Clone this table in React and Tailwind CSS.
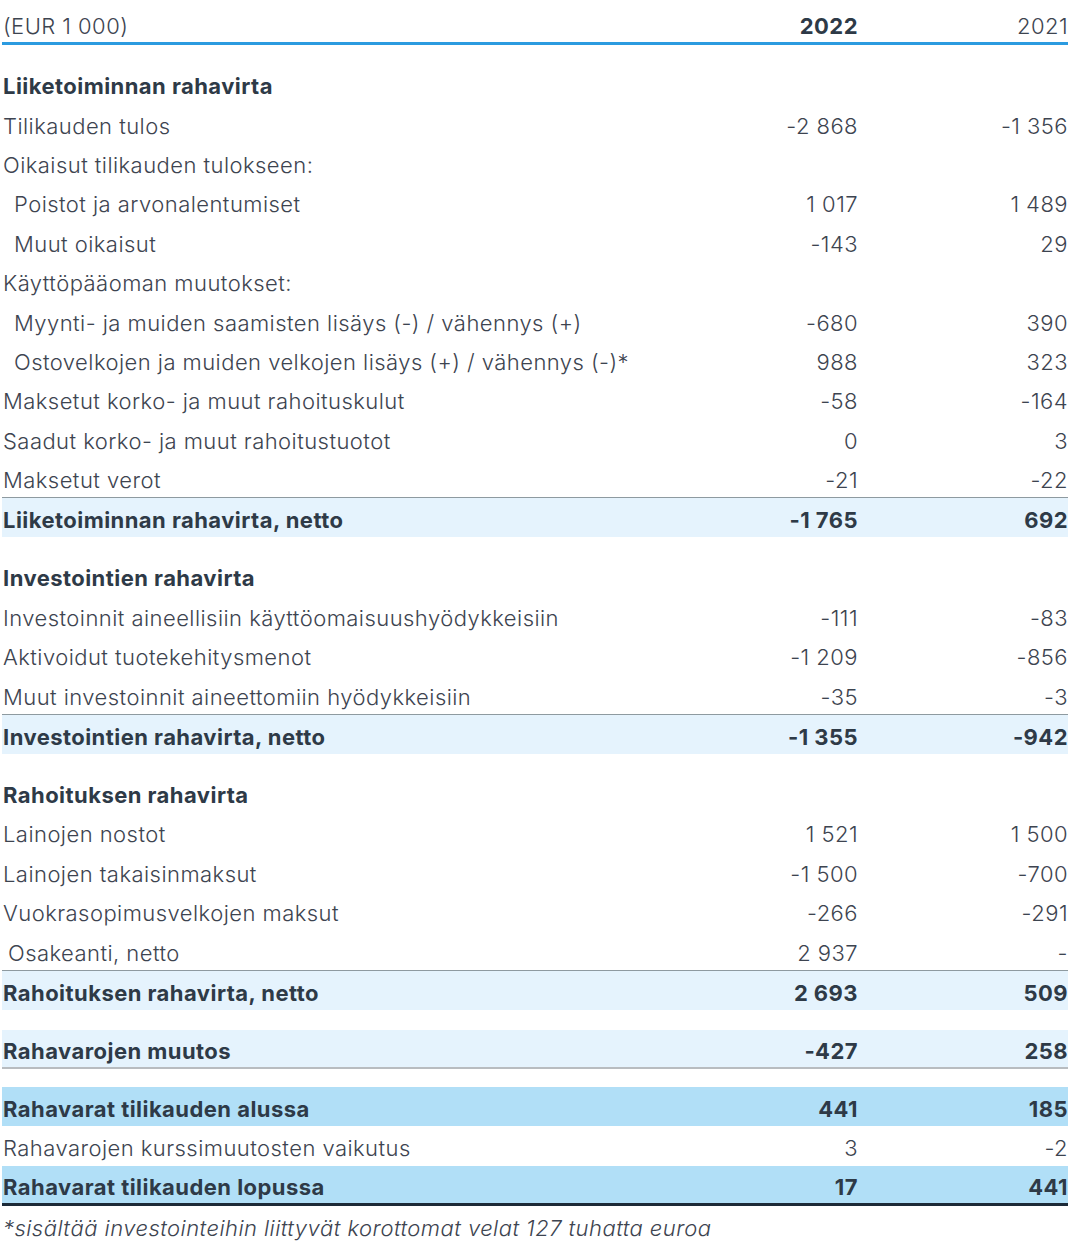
const font = { fontFamily: 'Inter, "Noto Sans", sans-serif' };

const sections = [
  {
    title: 'Liiketoiminnan rahavirta',
    rows: [
      { label: 'Tilikauden tulos', a: '-2 868', b: '-1 356' },
      { label: 'Oikaisut tilikauden tulokseen:', a: '', b: '' },
      { label: 'Poistot ja arvonalentumiset', a: '1 017', b: '1 489', indent: true },
      { label: 'Muut oikaisut', a: '-143', b: '29', indent: true },
      { label: 'Käyttöpääoman muutokset:', a: '', b: '' },
      { label: 'Myynti- ja muiden saamisten lisäys (-) / vähennys (+)', a: '-680', b: '390', indent: true },
      { label: 'Ostovelkojen ja muiden velkojen lisäys (+) / vähennys (-)*', a: '988', b: '323', indent: true },
      { label: 'Maksetut korko- ja muut rahoituskulut', a: '-58', b: '-164' },
      { label: 'Saadut korko- ja muut rahoitustuotot', a: '0', b: '3' },
      { label: 'Maksetut verot', a: '-21', b: '-22' },
    ],
    total: { label: 'Liiketoiminnan rahavirta, netto', a: '-1 765', b: '692' },
  },
  {
    title: 'Investointien rahavirta',
    rows: [
      { label: 'Investoinnit aineellisiin käyttöomaisuushyödykkeisiin', a: '-111', b: '-83' },
      { label: 'Aktivoidut tuotekehitysmenot', a: '-1 209', b: '-856' },
      { label: 'Muut investoinnit aineettomiin hyödykkeisiin', a: '-35', b: '-3' },
    ],
    total: { label: 'Investointien rahavirta, netto', a: '-1 355', b: '-942' },
  },
  {
    title: 'Rahoituksen rahavirta',
    rows: [
      { label: 'Lainojen nostot', a: '1 521', b: '1 500' },
      { label: 'Lainojen takaisinmaksut', a: '-1 500', b: '-700' },
      { label: 'Vuokrasopimusvelkojen maksut', a: '-266', b: '-291' },
      { label: 'Osakeanti, netto', a: '2 937', b: '-', small: true },
    ],
    total: { label: 'Rahoituksen rahavirta, netto', a: '2 693', b: '509' },
  },
];

function Row({ label, a, b, bold, indent, small, className = '' }) {
  const tone = bold ? 'font-bold text-[#2e3a47]' : 'font-light text-[#3d4450]';
  return (
    <div className={`grid grid-cols-[1fr_210px_210px] items-center pt-[5px] ${className}`}>
      <div className={`${tone} ${indent ? 'pl-[12px]' : small ? 'pl-[6px]' : 'pl-[1px]'}`}>{label}</div>
      <div className={`text-right ${tone}`}>{a}</div>
      <div className={`text-right ${tone}`}>{b}</div>
    </div>
  );
}

export default function App() {
  return (
    <div
      className="w-[1075px] h-[1254px] bg-white pl-[2px] pr-[7px] pt-[4px] text-[22px] leading-[24px] tracking-[0.45px]"
      style={font}
    >
      {/* header */}
      <div className="grid grid-cols-[1fr_210px_210px] items-end h-[41px] pb-[4px] border-b-[3px] border-[#2b9be0] font-light text-[#3d4450]">
        <div className="pl-[1px]">(EUR 1 000)</div>
        <div className="text-right font-bold text-[#2e3a47]">2022</div>
        <div className="text-right">2021</div>
      </div>

      {sections.map((s) => (
        <div key={s.title} className="mt-[19px]">
          <Row label={s.title} bold className="h-[39.4px]" />
          {s.rows.map((r) => (
            <Row key={r.label} {...r} className="h-[39.4px]" />
          ))}
          <Row {...s.total} bold className="h-[40px] border-t border-[#8e9aa0] bg-[#e5f3fd]" />
        </div>
      ))}

      <div className="mt-[20px]">
        <Row
          label="Rahavarojen muutos"
          a="-427"
          b="258"
          bold
          className="h-[39px] bg-[#e5f3fd] border-b-2 border-[#b8bcc0]"
        />
      </div>

      <div className="mt-[18px]">
        <Row label="Rahavarat tilikauden alussa" a="441" b="185" bold className="h-[39px] bg-[#b1dff7]" />
        <Row label="Rahavarojen kurssimuutosten vaikutus" a="3" b="-2" className="h-[40px]" />
        <Row
          label="Rahavarat tilikauden lopussa"
          a="17"
          b="441"
          bold
          className="h-[40px] bg-[#b1dff7] border-b-[3px] border-[#1c2a38]"
        />
      </div>

      <div className="pl-[1px] pt-[10px] italic font-light text-[#3d4450]">
        *sisältää investointeihin liittyvät korottomat velat 127 tuhatta euroa
      </div>
    </div>
  );
}
